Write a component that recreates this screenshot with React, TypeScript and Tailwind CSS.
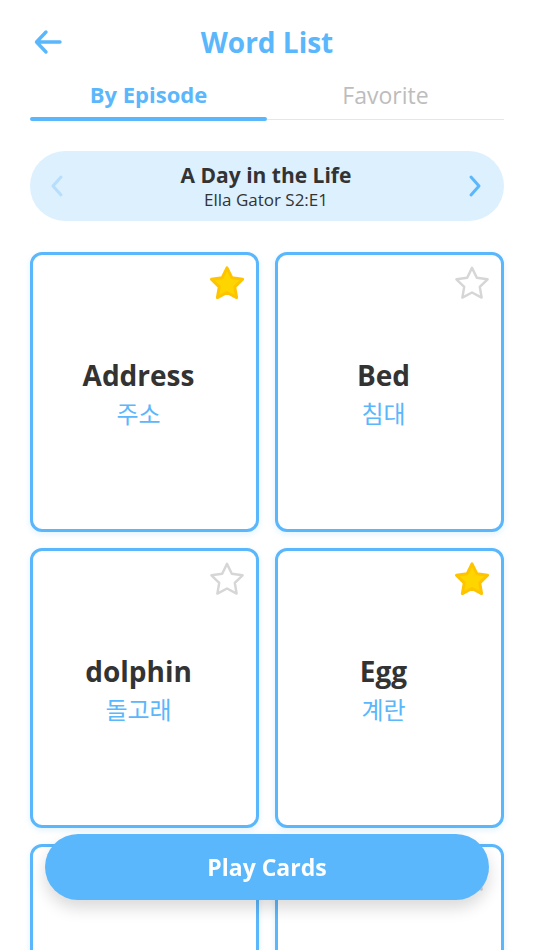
import React from "react";

const font = { fontFamily: '"Open Sans", "Noto Sans CJK KR", sans-serif' };

type Word = { en: string; ko: string; fav: boolean };

const words: Word[] = [
  { en: "Address", ko: "주소", fav: true },
  { en: "Bed", ko: "침대", fav: false },
  { en: "dolphin", ko: "돌고래", fav: false },
  { en: "Egg", ko: "계란", fav: true },
  { en: "Fish", ko: "물고기", fav: false },
  { en: "Garden", ko: "정원", fav: false },
];

function Star({ filled }: { filled: boolean }) {
  return (
    <svg width="42" height="42" viewBox="0 0 24 24">
      <path
        d="M12 2.8l2.75 5.6 6.15.9-4.45 4.35 1.05 6.1L12 16.85l-5.5 2.9 1.05-6.1L3.1 9.3l6.15-.9z"
        fill={filled ? "#FFD500" : "none"}
        stroke={filled ? "#FFC400" : "#D6D6D6"}
        strokeWidth={filled ? 1.7 : 1.4}
        strokeLinejoin="round"
      />
    </svg>
  );
}

function Card({ w }: { w: Word }) {
  return (
    <div className="relative flex h-[280px] flex-col items-center justify-center rounded-[12px] border-[3px] border-[#5BB7FB] bg-white pr-[12px] shadow-[0_2px_6px_rgba(91,183,251,0.18)]">
      <div className="absolute right-[8px] top-[8px]">
        <Star filled={w.fav} />
      </div>
      <div className="text-[28px] font-bold leading-[40px] text-[#333333]">{w.en}</div>
      <div className="mt-[3px] text-[24px] leading-[32px] text-[#5BB7FB]">{w.ko}</div>
    </div>
  );
}

export default function App() {
  return (
    <div className="min-h-screen w-full bg-white pb-[140px]" style={font}>
      <header className="relative flex h-[84px] items-center justify-center">
        <button className="absolute left-[33px] top-[28px] text-[#5BB7FB]">
          <svg width="30" height="28" viewBox="0 0 30 28" fill="none" stroke="#5BB7FB" strokeWidth="3.4" strokeLinecap="round" strokeLinejoin="round">
            <path d="M27 14H4M13 4L3.5 14 13 24" />
          </svg>
        </button>
        <h1 className="text-[28px] font-bold text-[#5BB7FB]">Word List</h1>
      </header>

      <div className="mx-[30px] flex">
        <div className="flex flex-1 flex-col items-center">
          <div className="h-[33px] text-[22px] font-bold leading-[20px] text-[#5BB7FB]">By Episode</div>
          <div className="h-[4px] w-full rounded-full bg-[#5BB7FB]" />
        </div>
        <div className="flex flex-1 flex-col items-center">
          <div className="h-[33px] pt-[1px] text-[23px] leading-[20px] text-[#BDBDBD]">Favorite</div>
          <div className="mt-[2px] h-[1px] w-full bg-[#E6E6E6]" />
        </div>
      </div>

      <div className="mx-[30px] mt-[30px] flex h-[70px] items-center justify-between rounded-full bg-[#DDF0FE] pl-[18px] pr-[20px]">
        <svg width="20" height="24" viewBox="0 0 20 24" fill="none" stroke="#B7DEFC" strokeWidth="3" strokeLinecap="round" strokeLinejoin="round">
          <path d="M13 3L5 12l8 9" />
        </svg>
        <div className="flex flex-col items-center">
          <div className="text-[21px] font-bold leading-[26px] text-[#333333]">A Day in the Life</div>
          <div className="text-[17px] leading-[23px] text-[#333333]">Ella Gator S2:E1</div>
        </div>
        <svg width="20" height="24" viewBox="0 0 20 24" fill="none" stroke="#5BB7FB" strokeWidth="3" strokeLinecap="round" strokeLinejoin="round">
          <path d="M7 3l8 9-8 9" />
        </svg>
      </div>

      <div className="mx-[30px] mt-[31px] grid grid-cols-2 gap-x-[16px] gap-y-[16px]">
        {words.map((w) => (
          <Card key={w.en} w={w} />
        ))}
      </div>

      <button className="fixed bottom-[50px] left-[45px] right-[45px] h-[66px] rounded-full bg-[#5BB7FB] text-[23px] font-bold text-white shadow-[0_8px_16px_rgba(0,0,0,0.15)]">
        Play Cards
      </button>
    </div>
  );
}
